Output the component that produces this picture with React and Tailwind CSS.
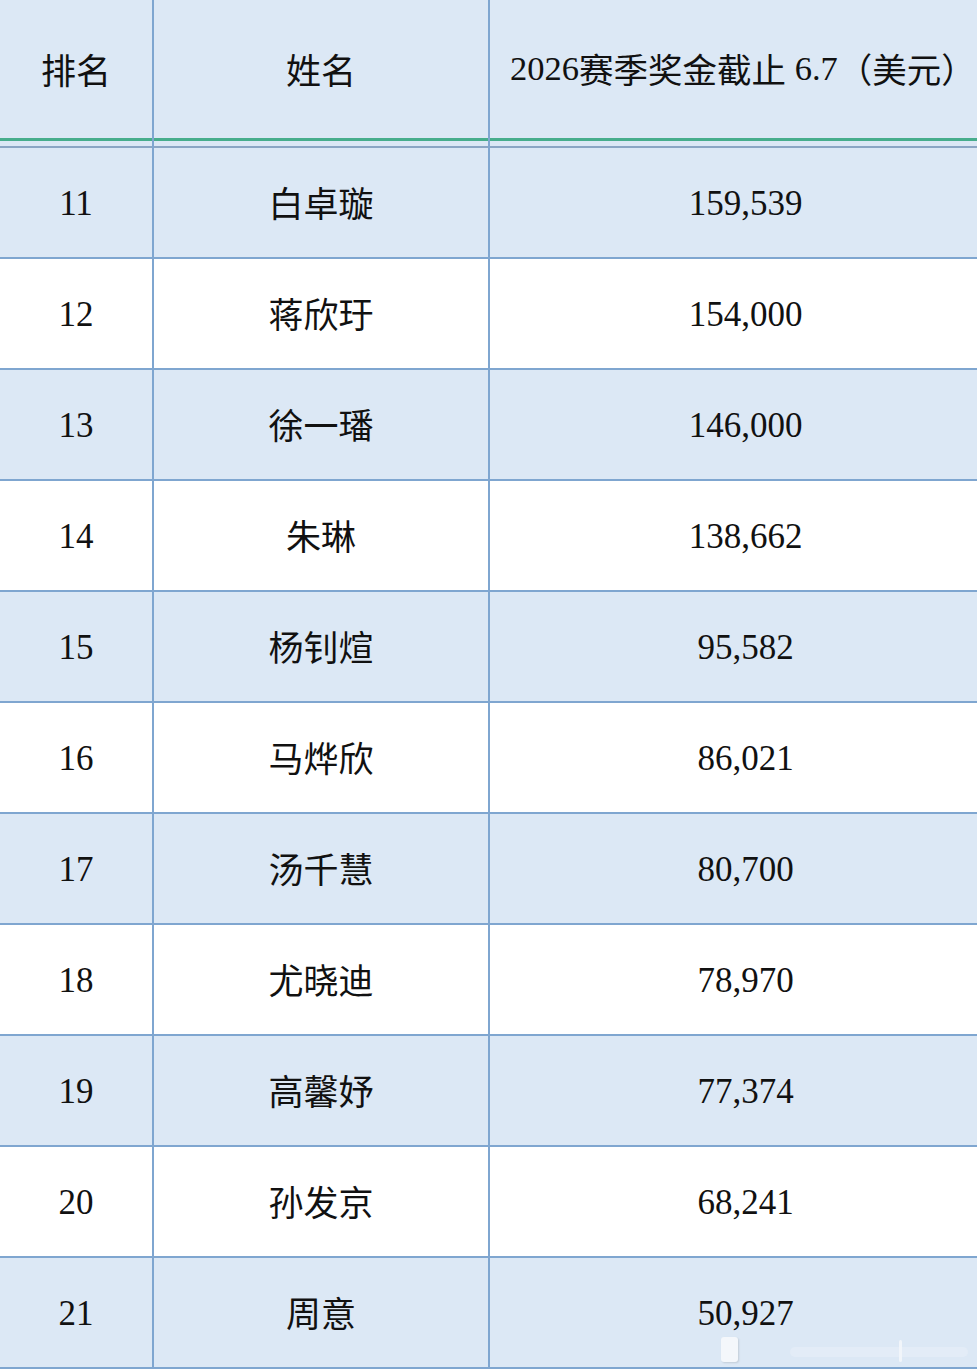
import React from "react";

const rows = [
  ["11", "白卓璇", "159,539"],
  ["12", "蒋欣玗", "154,000"],
  ["13", "徐一璠", "146,000"],
  ["14", "朱琳", "138,662"],
  ["15", "杨钊煊", "95,582"],
  ["16", "马烨欣", "86,021"],
  ["17", "汤千慧", "80,700"],
  ["18", "尤晓迪", "78,970"],
  ["19", "高馨妤", "77,374"],
  ["20", "孙发京", "68,241"],
  ["21", "周意", "50,927"],
];

function HeaderCell({ className, children, textClass = "justify-center" }) {
  return (
    <div className={`flex flex-col ${className}`}>
      <div className={`h-[138px] flex items-center ${textClass}`}>{children}</div>
      <div className="h-[3px] bg-[#47ad8c]" />
      <div className="h-[5px] bg-[#dce8f5]" />
      <div className="h-[2px] bg-[#8ba6c4]" />
    </div>
  );
}

const serif = "font-['Liberation_Serif','Times_New_Roman','DejaVu_Serif',serif]";
const cjk = "font-['Noto_Sans_CJK_SC',sans-serif]";

export default function App() {
  return (
    <div className="relative w-[977px] h-[1372px] overflow-hidden bg-white text-[35px] text-[#111]">
      <div className="flex bg-[#dce8f5]">
        <HeaderCell className="w-[154px] shrink-0 border-r-2 border-[#7fa6d0]" textClass={`justify-center ${cjk}`}>
          排名
        </HeaderCell>
        <HeaderCell className="w-[336px] shrink-0 border-r-2 border-[#7fa6d0]" textClass={`justify-center ${cjk}`}>
          姓名
        </HeaderCell>
        <HeaderCell className="flex-1 min-w-0" textClass="justify-start whitespace-nowrap pl-[20px] text-[34.5px]">
          <span className={serif}>2026</span>
          <span className={cjk}>赛季奖金截止</span>
          <span className={serif}>&nbsp;6.7</span>
          <span className={cjk}>（美元）</span>
        </HeaderCell>
      </div>
      {rows.map(([rank, name, prize], i) => (
        <div
          key={rank}
          className={`flex h-[111px] border-b-2 border-[#7fa6d0] ${i % 2 === 0 ? "bg-[#dce8f5]" : "bg-white"}`}
        >
          <div className={`w-[154px] shrink-0 border-r-2 border-[#7fa6d0] flex items-center justify-center pt-[3px] ${serif}`}>
            {rank}
          </div>
          <div className={`w-[336px] shrink-0 border-r-2 border-[#7fa6d0] flex items-center justify-center ${cjk}`}>
            {name}
          </div>
          <div className={`flex-1 min-w-0 flex items-center justify-center pt-[3px] pl-[24px] ${serif}`}>{prize}</div>
        </div>
      ))}
      <div className="absolute left-[721px] top-[1337px] w-[17px] h-[25px] rounded-[3px] bg-[#f4f7fb] shadow-[1px_1px_2px_rgba(0,0,0,0.12)]" />
      <div className="absolute left-[790px] top-[1347px] w-[178px] h-[10px] rounded-full bg-[#e3ecf7]" />
      <div className="absolute left-[899px] top-[1340px] w-[3px] h-[22px] rounded-full bg-[#f1f5fa]" />
    </div>
  );
}
